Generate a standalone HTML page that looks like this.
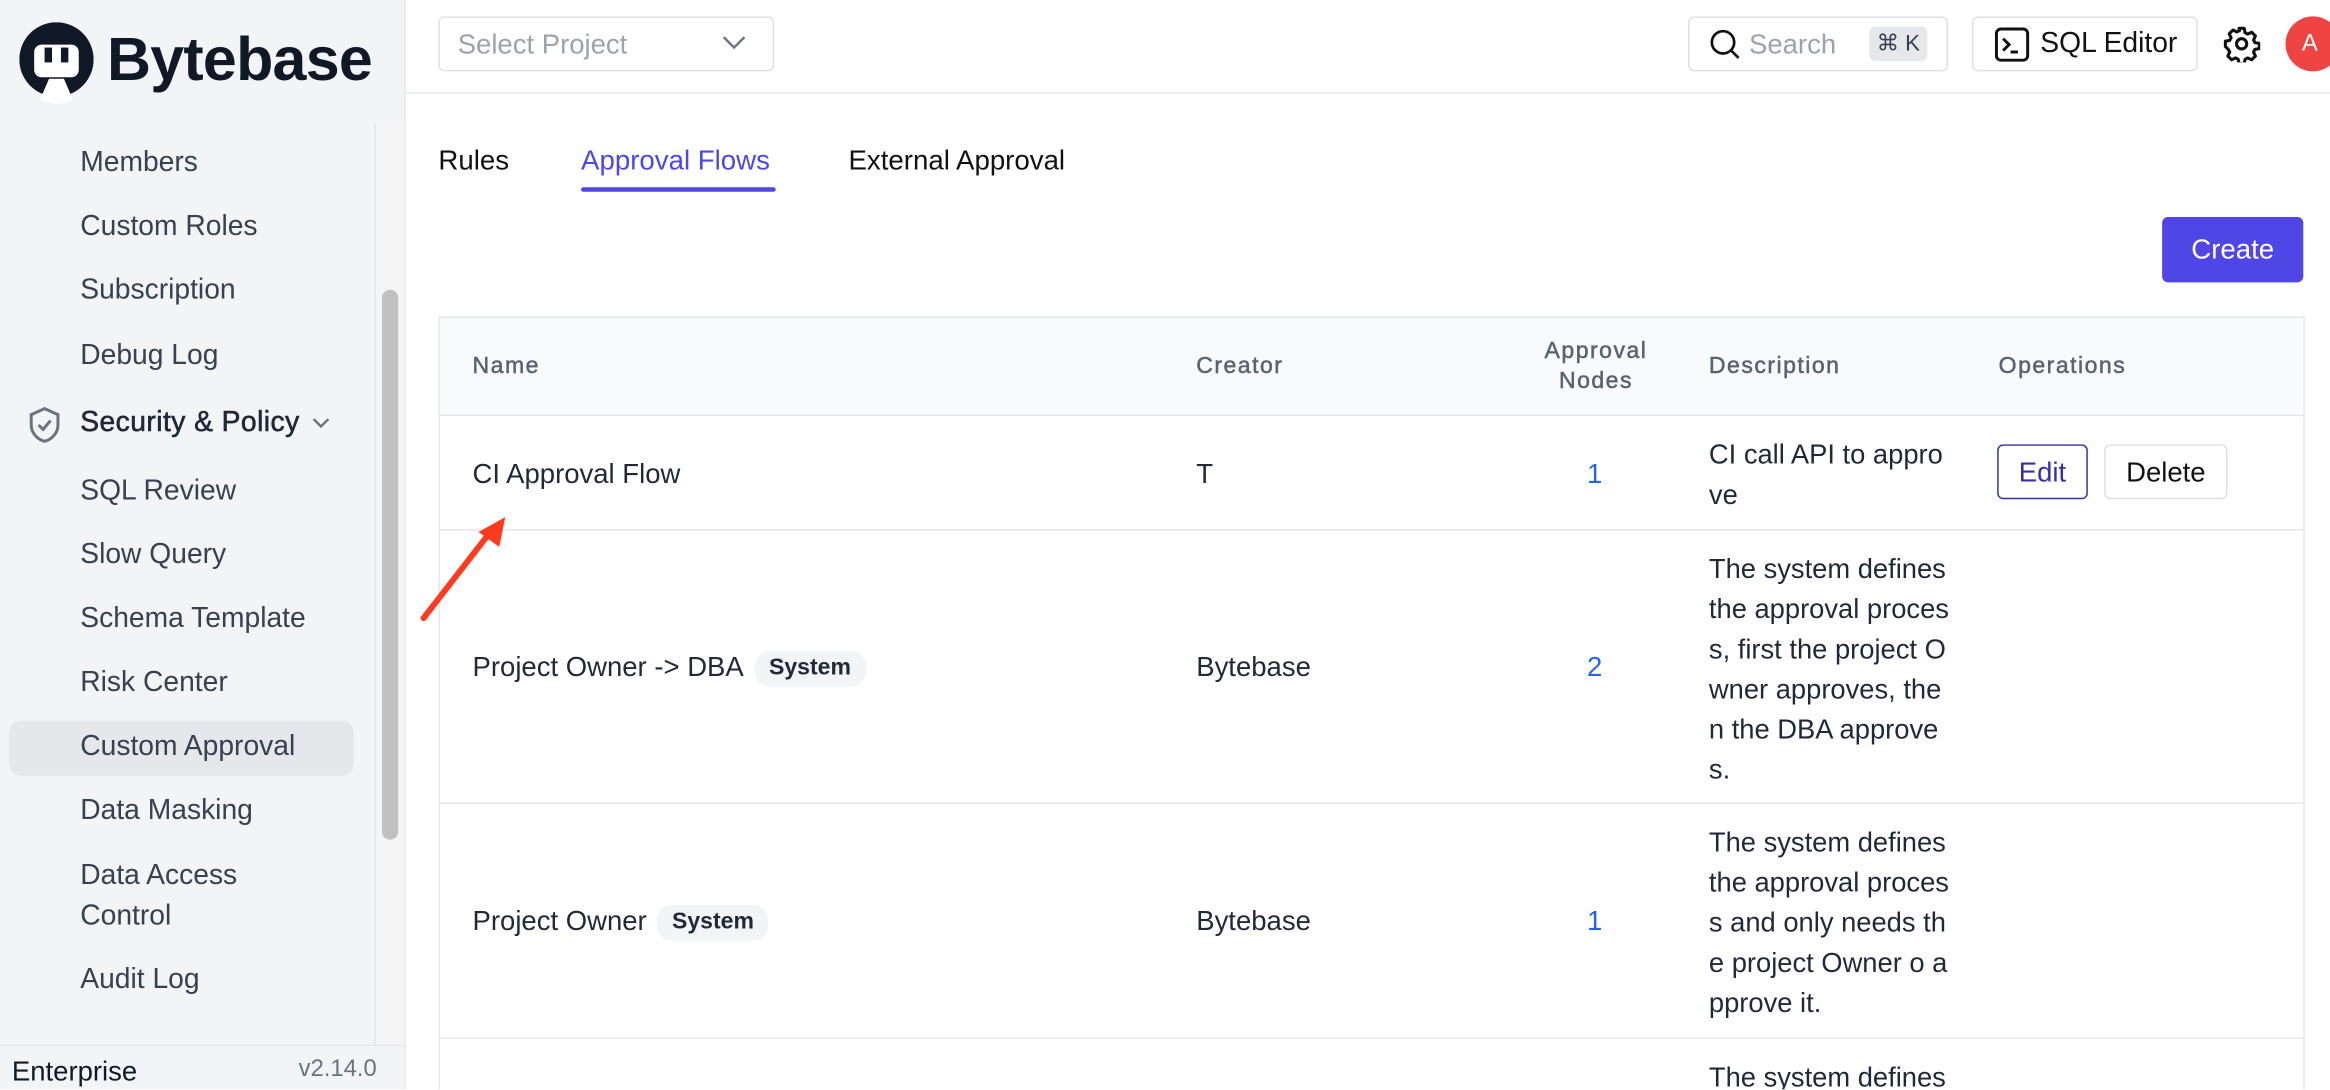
<!DOCTYPE html>
<html><head><meta charset="utf-8"><style>
html,body{margin:0;padding:0;width:2330px;height:1090px;overflow:hidden;background:#fff}
#w{position:absolute;left:0;top:0;width:1568px;height:733px;overflow:hidden;transform:scale(1.486);transform-origin:0 0;font-family:"Liberation Sans",sans-serif;color:#1f2937}
.a{position:absolute;white-space:nowrap}
.sb{position:absolute;left:0;top:0;width:272px;height:733px;background:#f3f4f6;border-right:1px solid #e5e7eb}
.ni{position:absolute;left:54px;font-size:19px;color:#374151}
.box{position:absolute;border:1.5px solid #e0e0e4;border-radius:4px;background:#fff;box-sizing:border-box}
.th{position:absolute;font-size:15.5px;color:#5b6270;letter-spacing:1px;-webkit-text-stroke:0.35px #5b6270}
.td{position:absolute;font-size:18.5px;color:#1f2937;white-space:nowrap}
.ds{position:absolute;left:1150px;font-size:18.4px;line-height:27px;color:#1f2937;white-space:nowrap}
.n{color:#2563eb}
.badge{display:inline-block;background:#f3f4f6;border-radius:10px;padding:3px 10px;font-size:15.5px;font-weight:bold;margin-left:7px;vertical-align:1px}
.hl{position:absolute;left:295px;width:1255px;height:1px;background:#e5e7eb}
</style></head><body><div id="w">
<div class="sb"></div>
<div style="position:absolute;left:252px;top:83px;width:18px;height:620px;background:#f5f5f6;border-left:1px solid #e5e7eb"></div>
<div style="position:absolute;left:257px;top:195px;width:11px;height:370px;background:#c1c1c1;border-radius:6px"></div>
<svg class="a" style="left:13px;top:15px" width="50" height="60" viewBox="0 0 50 60"><circle cx="25" cy="25" r="25" fill="#111827"/><path d="M14 52 L20 38 L30 38 L36 52 Q25 58 14 52Z" fill="#fff"/><rect x="10" y="15" width="30" height="22" rx="5" fill="#fff"/><rect x="17" y="17" width="5" height="10" fill="#111827"/><rect x="28" y="17" width="5" height="10" fill="#111827"/></svg>
<div class="a" style="left:72px;top:17px;font-size:41px;font-weight:bold;color:#111827;letter-spacing:-0.5px">Bytebase</div>
<div class="ni" style="top:99px">Members</div>
<div class="ni" style="top:142px">Custom Roles</div>
<div class="ni" style="top:185px">Subscription</div>
<div class="ni" style="top:229px">Debug Log</div>
<svg class="a" style="left:19px;top:273px" width="22" height="26" viewBox="0 0 22 26"><path d="M11 2 L20 6 V13 C20 19 15 23 11 24 C7 23 2 19 2 13 V6Z" fill="none" stroke="#6b7280" stroke-width="2"/><path d="M7 13 L10 16 L15 10" fill="none" stroke="#6b7280" stroke-width="2"/></svg>
<div class="ni" style="top:274px;color:#1f2937;-webkit-text-stroke:0.4px #1f2937;letter-spacing:0.3px">Security &amp; Policy</div>
<svg class="a" style="left:209px;top:280px" width="14" height="10"><path d="M2 2 L7 7 L12 2" fill="none" stroke="#6b7280" stroke-width="1.6"/></svg>
<div class="ni" style="top:320px">SQL Review</div>
<div class="ni" style="top:363px">Slow Query</div>
<div class="ni" style="top:406px">Schema Template</div>
<div class="ni" style="top:449px">Risk Center</div>
<div style="position:absolute;left:6px;top:485px;width:232px;height:37px;background:#e5e7eb;border-radius:8px"></div>
<div class="ni" style="top:492px">Custom Approval</div>
<div class="ni" style="top:535px">Data Masking</div>
<div class="ni" style="top:579px">Data Access</div>
<div class="ni" style="top:606px">Control</div>
<div class="ni" style="top:649px">Audit Log</div>
<div style="position:absolute;left:0;top:703px;width:272px;height:31px;background:#f3f4f6;border-top:1px solid #e5e7eb"></div>
<div class="a" style="left:8px;top:710px;font-size:18.5px;color:#111827">Enterprise</div>
<div class="a" style="left:201px;top:711px;font-size:16px;color:#6b7280">v2.14.0</div>

<div style="position:absolute;left:273px;top:62px;width:1295px;height:1px;background:#e5e7eb"></div>
<div class="box" style="left:295px;top:11px;width:226px;height:37px"></div>
<div class="a" style="left:308px;top:19px;font-size:18.5px;color:#9ca3af">Select Project</div>
<svg class="a" style="left:485px;top:22px" width="18" height="14"><path d="M2 3 L9 10 L16 3" fill="none" stroke="#6b7280" stroke-width="1.6"/></svg>
<div class="box" style="left:1136px;top:11px;width:175px;height:37px"></div>
<svg class="a" style="left:1150px;top:19px" width="22" height="22" viewBox="0 0 22 22"><circle cx="9.5" cy="9.5" r="7.5" fill="none" stroke="#111" stroke-width="1.8"/><path d="M15 15 L20 20" stroke="#111" stroke-width="1.8"/></svg>
<div class="a" style="left:1177px;top:19px;font-size:18.5px;color:#9ca3af">Search</div>
<div class="a" style="left:1258px;top:18px;width:39px;height:23px;background:#e5e7eb;border-radius:4px;font-size:15px;color:#374151;text-align:center;line-height:23px">⌘ K</div>
<div class="box" style="left:1327px;top:11px;width:152px;height:37px"></div>
<svg class="a" style="left:1342px;top:18px" width="24" height="24" viewBox="0 0 24 24"><rect x="1.5" y="1.5" width="21" height="21" rx="3" fill="none" stroke="#111" stroke-width="2"/><path d="M6 8 L10 12 L6 16 M11 17 H16" fill="none" stroke="#111" stroke-width="2"/></svg>
<div class="a" style="left:1373px;top:19px;font-size:19px;color:#111">SQL Editor</div>
<svg class="a" style="left:1496px;top:17px" width="25" height="25" viewBox="0 0 24 24"><path d="M10.3 2h3.4l.5 2.8 1.7.9 2.6-1.2 2.4 2.4-1.2 2.6.9 1.7 2.8.5v3.4l-2.8.5-.9 1.7 1.2 2.6-2.4 2.4-2.6-1.2-1.7.9-.5 2.8h-3.4l-.5-2.8-1.7-.9-2.6 1.2-2.4-2.4 1.2-2.6-.9-1.7L1.5 13.7v-3.4l2.8-.5.9-1.7L4 5.5 6.4 3.1 9 4.3l1.7-.9z" fill="none" stroke="#111" stroke-width="2" stroke-linejoin="round"/><circle cx="12" cy="12" r="3.3" fill="none" stroke="#111" stroke-width="2"/></svg>
<div class="a" style="left:1538px;top:11px;width:37px;height:37px;border-radius:50%;background:#ef4444;color:#fff;font-size:16px;line-height:37px;text-indent:11px">A</div>

<div class="a" style="left:295px;top:97px;font-size:18.6px;color:#111">Rules</div>
<div class="a" style="left:391px;top:97px;font-size:18.6px;color:#4f46e5">Approval Flows</div>
<div style="position:absolute;left:391px;top:126px;width:131px;height:3px;background:#4f46e5;border-radius:2px"></div>
<div class="a" style="left:571px;top:97px;font-size:18.6px;color:#111">External Approval</div>
<div class="a" style="left:1455px;top:146px;width:95px;height:44px;background:#4f46e5;border-radius:4px;color:#fff;font-size:18.6px;text-align:center;line-height:44px">Create</div>

<div style="position:absolute;left:295px;top:213px;width:1254px;height:540px;border:1px solid #e5e7eb;border-bottom:none"></div>
<div style="position:absolute;left:296px;top:214px;width:1253px;height:65px;background:#f9fafb"></div>
<div class="th" style="left:318px;top:238px">Name</div>
<div class="th" style="left:805px;top:238px">Creator</div>
<div class="th" style="left:1018px;top:227px;width:112px;text-align:center;line-height:20px">Approval<br>Nodes</div>
<div class="th" style="left:1150px;top:238px">Description</div>
<div class="th" style="left:1345px;top:238px">Operations</div>
<div class="hl" style="top:279px"></div>
<div class="td" style="left:318px;top:308px">CI Approval Flow</div>
<div class="td" style="left:805px;top:308px">T</div>
<div class="td n" style="left:1068px;top:308px">1</div>
<div class="ds" style="top:292px">CI call API to appro<br>ve</div>
<div class="a" style="left:1344px;top:299px;width:61px;height:37px;box-sizing:border-box;border:1.5px solid #3730a3;border-radius:4px;color:#3730a3;font-size:18.5px;text-align:center;line-height:35px">Edit</div>
<div class="a" style="left:1416px;top:299px;width:83px;height:37px;box-sizing:border-box;border:1.5px solid #e0e0e4;border-radius:4px;color:#111;font-size:18.5px;text-align:center;line-height:35px">Delete</div>
<div class="hl" style="top:356px"></div>
<div class="td" style="left:318px;top:438px">Project Owner -&gt; DBA<span class="badge">System</span></div>
<div class="td" style="left:805px;top:438px">Bytebase</div>
<div class="td n" style="left:1068px;top:438px">2</div>
<div class="ds" style="top:369px">The system defines<br>the approval proces<br>s, first the project O<br>wner approves, the<br>n the DBA approve<br>s.</div>
<div class="hl" style="top:540px"></div>
<div class="td" style="left:318px;top:609px">Project Owner<span class="badge">System</span></div>
<div class="td" style="left:805px;top:609px">Bytebase</div>
<div class="td n" style="left:1068px;top:609px">1</div>
<div class="ds" style="top:553px">The system defines<br>the approval proces<br>s and only needs th<br>e project Owner o a<br>pprove it.</div>
<div class="hl" style="top:698px"></div>
<div class="ds" style="top:711px">The system defines</div>

<svg class="a" style="left:278px;top:340px" width="70" height="82"><path d="M7 76 L52 18" stroke="#ff3b1f" stroke-width="4" stroke-linecap="round"/><path d="M62 8 L44 18 L58 28Z" fill="#ff3b1f"/></svg>
</div></body></html>
